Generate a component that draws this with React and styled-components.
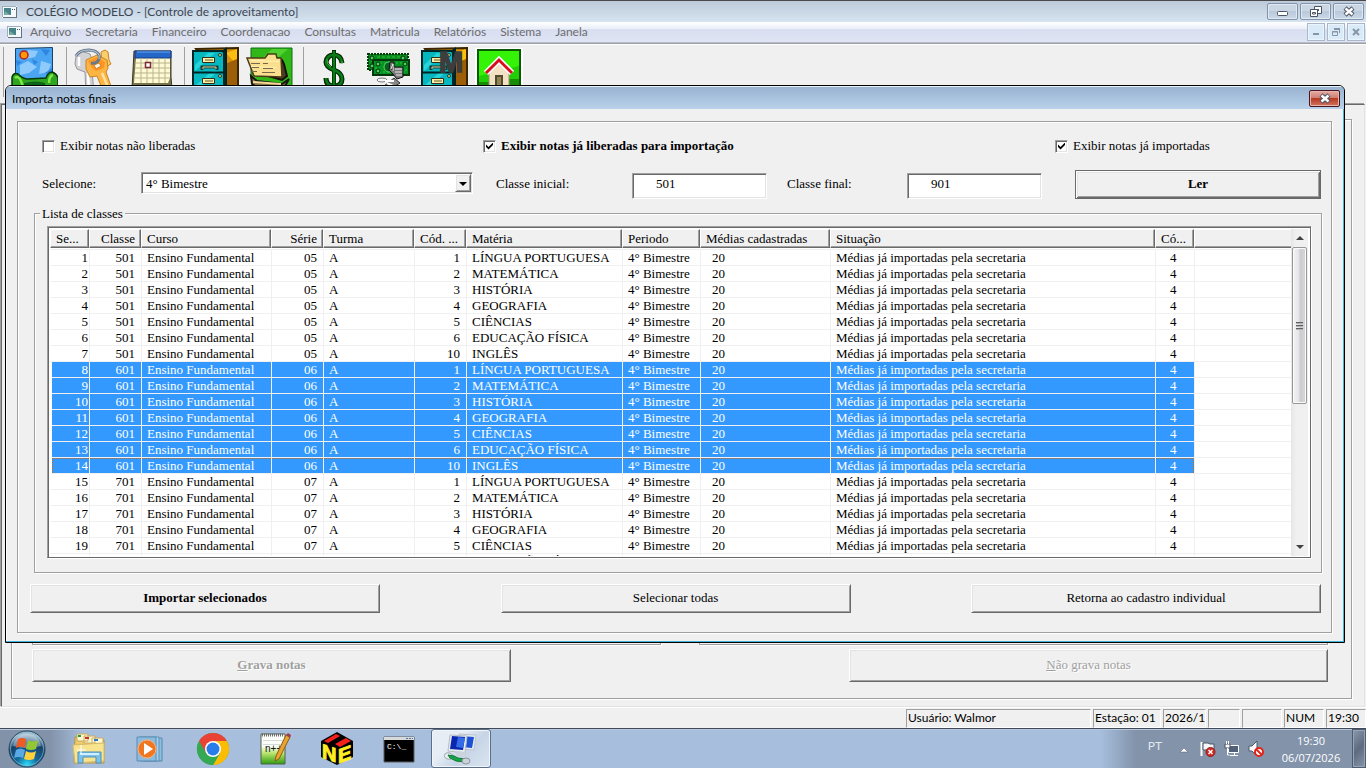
import React from 'react';
import styled, { createGlobalStyle, css } from 'styled-components';

const GlobalStyle = createGlobalStyle`
  * {
    box-sizing: border-box;
  }

  body {
    margin: 0;
    background: #f0f0f0;
    overflow: hidden;
  }

  button, input, select {
    font: inherit;
    color: inherit;
    margin: 0;
    border-radius: 0;
  }
`;

const serif = '"Liberation Serif", "Times New Roman", serif';
const sans = 'Lato, "Open Sans", sans-serif';

const raised = css`
  border: 1px solid;
  border-color: #fff #696969 #696969 #fff;
  box-shadow: inset 1px 1px 0 #e3e3e3, inset -1px -1px 0 #a0a0a0;
`;

const sunken = css`
  border: 1px solid;
  border-color: #a0a0a0 #fff #fff #a0a0a0;
  box-shadow: inset 1px 1px 0 #696969, inset -1px -1px 0 #e3e3e3;
`;

const etched = css`
  border: 1px solid #a0a0a0;
  box-shadow: 1px 1px 0 #fff, inset 1px 1px 0 #fff;
`;

const Desktop = styled.div`
  display: flex;
  flex-direction: column;
  height: 100vh;
  background: #f0f0f0;
  font: 12px ${sans};
  color: #000;
`;

const TitleBar = styled.header`
  display: flex;
  align-items: center;
  height: 22px;
  padding: 0 2px;
  border-top: 1px solid #4a4a4f;
  background: linear-gradient(#bccada, #d6e4f1);
  color: #3c4653;
  white-space: nowrap;
`;

const TitleText = styled.span`
  flex: 1;
  margin-left: 9px;
`;

const CaptionButtons = styled.div`
  display: flex;
  gap: 2px;
`;

const CaptionButton = styled.button`
  display: flex;
  align-items: center;
  justify-content: center;
  width: 31px;
  height: 17px;
  padding: 0;
  border: 1px solid #8393a9;
  border-radius: 2px;
  background: linear-gradient(#cad6e4 45%, #b9c8da 50%, #cbd9e8);
  box-shadow: inset 0 0 0 1px #dfe9f3;

  ${({ $close }) =>
    $close &&
    css`
      border-color: #4b1520;
      background: linear-gradient(#e0a298 10%, #d08073 45%, #b83a22 50%, #cf7460);
      box-shadow: inset 0 0 0 1px #e6b5ac;
    `}
`;

const ChildButton = styled(CaptionButton)`
  width: 18px;
  height: 18px;
  border-color: #a9b8c6;
  border-radius: 0;
  background: #d9eaf9;
  box-shadow: inset 0 0 0 1px #eaf4fd;
`;

const MenuBar = styled.nav`
  display: flex;
  align-items: center;
  height: 21px;
  padding: 0 1px 0 7px;
  border-bottom: 1px solid #b5bdd0;
  background: linear-gradient(#fff, #e9eef7 34%, #d8def0 38%, #e0e4f5);
  color: #6d6d6d;
`;

const MenuItem = styled.button`
  padding: 0;
  border: 0;
  background: none;
  line-height: 18px;
`;

const MenuItems = styled.div`
  flex: 1;
  display: flex;
  gap: 14px;
  margin-left: 8px;
`;

const Toolbar = styled.div`
  display: flex;
  align-items: flex-start;
  height: 61px;
  padding-left: 3px;
  border-top: 1px solid #a0a0a0;
  box-shadow: inset 0 1px 0 #fff;
`;

const ToolGroup = styled.div`
  display: flex;
  gap: 7px;
  height: 50px;
  margin-top: 3px;
  padding: 0 ${({ $end }) => $end || 6}px 0 6px;
  border-left: 1px solid #a0a0a0;
`;

const ToolButton = styled.button`
  width: 48px;
  height: 48px;
  padding: 0;
  border: 0;
  background: none;
`;

const MdiClient = styled.main`
  flex: 1;
  min-height: 0;
  display: flex;
  margin: 0 1px;
  padding: 14px 12px 7px 9px;
  border: 1px solid;
  border-color: #696969 #e3e3e3 #e3e3e3 #696969;
  box-shadow: -1px -1px 0 #a0a0a0;
`;

const ChildForm = styled.section`
  flex: 1;
  display: grid;
  grid-template: 1fr auto / 1fr 1fr;
  column-gap: 38px;
  row-gap: 4px;
  padding: 0 23px 16px 20px;
  ${etched}
`;

const Pane = styled.div`
  ${etched}
`;

const PushButton = styled.button`
  height: 29px;
  padding: 0 0 2px;
  background: #f0f0f0;
  font: ${({ $bold }) => ($bold ? 'bold' : 'normal')} 13px ${serif};
  ${raised}

  &:disabled {
    width: 479px;
    height: 33px;
    color: #a0a0a0;
    text-shadow: 1px 1px 0 #fff;
    justify-self: ${({ $side }) => $side};
  }
`;

const DefaultButton = styled(PushButton)`
  width: 246px;
  border-color: #696969;
  box-shadow: inset 1px 1px 0 #fff, inset -1px -1px 0 #696969, inset 2px 2px 0 #e3e3e3, inset -2px -2px 0 #a0a0a0;
`;

const Dialog = styled.section`
  position: absolute;
  top: 85px;
  left: 5px;
  right: 21px;
  border: 1px solid #000;
  border-radius: 6px 6px 0 0;
  background: #f0f0f0;
  box-shadow: inset -1px -1px 0 #42b4d8, inset 1px 1px 0 #fff;
  overflow: hidden;
`;

const DialogTitle = styled.header`
  display: flex;
  align-items: center;
  justify-content: space-between;
  height: 23px;
  padding: 0 4px 0 6px;
  border-top: 1px solid #e8f0f8;
  background: linear-gradient(#98b3d1, #b9d1ea);
  font: 12px ${sans};
`;

const Group = styled.div`
  margin: 12px 12px 9px 11px;
  padding-top: 16px;
  ${etched}
`;

const Form = styled.form`
  font: 13px/16px ${serif};
`;

const Checks = styled.div`
  display: grid;
  grid-template-columns: 441fr 572fr 276fr;
  height: 14px;
  padding-left: 24px;
`;

const CheckLabel = styled.label`
  display: flex;
  align-items: center;
  gap: 5px;
  font-weight: ${({ $bold }) => ($bold ? 'bold' : 'normal')};
  white-space: nowrap;
`;

const CheckBox = styled.input.attrs({ type: 'checkbox' })`
  appearance: none;
  width: 13px;
  height: 13px;
  background: #fff;
  ${sunken}

  &:checked::after {
    content: '';
    display: block;
    width: 7px;
    height: 7px;
    margin: 2px;
    background: #000;
    clip-path: polygon(0 29%, 36% 64%, 100% 0, 100% 36%, 36% 100%, 0 64%);
  }
`;

const Filters = styled.div`
  display: flex;
  align-items: center;
  height: 29px;
  margin-top: 18px;
  padding: 0 10px 0 24px;
`;

const FieldLabel = styled.label`
  width: ${({ $width }) => $width}px;
  padding-bottom: 2px;
`;

const SelectBox = styled.div`
  flex: 1;
  display: flex;
  position: relative;
  margin: 0 23px 3px 0;
`;

const Select = styled.select`
  appearance: none;
  flex: 1;
  height: 22px;
  padding: 2px 4px 0;
  background: #fff;
  ${sunken}
`;

const SelectArrow = styled.span`
  position: absolute;
  top: 2px;
  right: 2px;
  width: 16px;
  height: 18px;
  background: #f0f0f0;
  pointer-events: none;
  ${raised}

  &::after {
    content: '';
    position: absolute;
    top: 7px;
    left: 3px;
    border: 4px solid transparent;
    border-top-color: #000;
    border-bottom: 0;
  }
`;

const TextInput = styled.input`
  align-self: flex-end;
  width: 135px;
  height: 26px;
  margin-right: ${({ $gap }) => $gap}px;
  padding: 0 24px 4px 23px;
  background: #fff;
  ${sunken}
`;

const ListGroup = styled.fieldset`
  min-width: 0;
  margin: 5px 9px 0 16px;
  padding: 0;
  ${etched}
`;

const Legend = styled.legend`
  margin-left: 5px;
  padding: 2px 2px 0;
  background: #f0f0f0;
`;

const ListView = styled.div`
  display: flex;
  height: 332px;
  margin: 4px 10px 14px 12px;
  border: 1px solid #696969;
  border-top-color: #a0a0a0;
  border-left-color: #a0a0a0;
  background: #fff;
  box-shadow: inset 1px 1px 0 #696969, inset -1px -1px 0 #fff, 1px 1px 0 #fff;
`;

const ListBody = styled.div`
  flex: 1;
  min-width: 0;
  margin: 2px 0 1px 2px;
  overflow: hidden;
`;

const Table = styled.table`
  width: 100%;
  border-spacing: 0;
  table-layout: fixed;
`;

const Th = styled.th`
  height: 19px;
  padding: 0 5px 0 5px;
  background: #f0f0f0;
  border: solid;
  border-width: 1px;
  border-color: #fff #696969 #696969 #fff;
  box-shadow: inset -1px -1px 0 #a0a0a0;
  font-weight: normal;
  line-height: 16px;
  text-align: ${({ $align }) => $align || 'left'};
  white-space: nowrap;

  &:last-child {
    border-right: 0;
    box-shadow: inset 0 -1px 0 #a0a0a0;
  }
`;

const Spacer = styled.td`
  height: 2px;
  padding: 0;
  border-bottom: 1px solid #f0f0f0;
`;

const Td = styled.td`
  height: 16px;
  padding: 0 6px 0 ${({ $indent }) => $indent || 5}px;
  border-bottom: 1px solid #f0f0f0;
  border-left: 1px solid #f0f0f0;
  line-height: 14px;
  text-align: ${({ $align }) => $align || 'left'};
  white-space: nowrap;

  &:first-child {
    padding-right: 1px;
    border-left: 2px solid #fff;
  }
`;

// focus rectangle, one orange pixel out of two
const dots = 'linear-gradient(90deg, #cc6600 50%, #3399ff 50%) top left / 2px 1px repeat-x';
const sideDots = 'linear-gradient(#cc6600 50%, #3399ff 50%)';

const Tr = styled.tr`
  ${({ $selected }) =>
    $selected &&
    css`
      color: #fff;

      ${Td}:not(:last-child) {
        background: #3399ff;
        background-clip: padding-box;
      }
    `}

  ${({ $focused }) =>
    $focused &&
    css`
      ${Td}:not(:last-child) {
        background: ${dots}, #3399ff;
        background-clip: padding-box;
      }

      ${Td}:first-child {
        background: ${dots}, ${sideDots} top left / 1px 2px repeat-y, #3399ff;
        background-clip: padding-box;
      }

      ${Td}:nth-last-child(2) {
        background: ${dots}, ${sideDots} top right / 1px 2px repeat-y, #3399ff;
        background-clip: padding-box;
      }
    `}
`;

const ScrollBar = styled.div`
  display: flex;
  flex-direction: column;
  width: 17px;
  margin: 2px 2px 1px 0;
  background: linear-gradient(90deg, #e6e6e6, #f0f0f0 30%, #f0f0f0);
`;

const ScrollArrow = styled.button`
  display: flex;
  align-items: center;
  justify-content: center;
  width: 17px;
  height: 18px;
  padding: 0;
  border: 0;
  background: none;

  &::after {
    content: '';
    border: 4px solid transparent;
    ${({ $down }) =>
      $down
        ? 'border-top-color: #404040; border-bottom: 0;'
        : 'border-bottom-color: #404040; border-top: 0;'}
  }
`;

const ScrollTrack = styled.div`
  flex: 1;
`;

const ScrollThumb = styled.div`
  display: flex;
  flex-direction: column;
  align-items: center;
  justify-content: center;
  gap: 1px;
  width: 15px;
  height: 157px;
  margin-left: 1px;
  border: 1px solid #979797;
  border-radius: 2px;
  background: linear-gradient(90deg, #f4f4f4, #e4e4e6 45%, #cbcbd0 55%, #d9d9dc);
  box-shadow: inset 0 0 0 1px #fafafa;
`;

const Grip = styled.span`
  width: 7px;
  height: 2px;
  border-top: 1px solid #606060;
  background: #b4b4b4;
`;

const Actions = styled.div`
  display: flex;
  justify-content: space-between;
  margin: 11px 10px 19px 12px;

  ${PushButton} {
    width: 350px;
  }
`;

const StatusBar = styled.footer`
  display: flex;
  justify-content: flex-end;
  gap: 2px;
  height: 21px;
  padding-top: 1px;
  border-top: 1px solid #fff;
`;

const StatusItem = styled.span`
  width: ${({ $width }) => $width}px;
  height: 19px;
  padding-left: 1px;
  border: 1px solid;
  border-color: #a0a0a0 #fff #fff #a0a0a0;
  line-height: 16px;
  white-space: nowrap;
`;

const TaskBar = styled.footer`
  display: flex;
  height: 40px;
  border-top: 1px solid #404a5a;
  background: linear-gradient(90deg, #8292a9 50px, #a7bfdd 84px, #a7bfdd calc(100% - 266px), #8293aa calc(100% - 230px));
  box-shadow: inset 0 1px 0 #b9c8dc;
  color: #fff;
`;

const StartButton = styled.button`
  width: 58px;
  padding: 1px 0 0 8px;
  border: 0;
  background: none;
  text-align: left;
`;

const TaskButton = styled.button`
  width: 62px;
  height: 39px;
  padding: 0;
  border: 1px solid transparent;
  background: none;

  svg {
    display: block;
    margin: auto;
  }

  ${({ $active }) =>
    $active &&
    css`
      width: 60px;
      margin-left: 1px;
      border-color: #5c6f88;
      border-radius: 3px;
      background: linear-gradient(135deg, #e6edf5 35%, #c6d5e7 60%, #dbe5f0);
      box-shadow: inset 0 0 0 1px #f2f6fa;
    `}
`;

const Tray = styled.div`
  display: flex;
  align-items: center;
  gap: 8px;
  margin-left: auto;
`;

const Language = styled.span`
  align-self: flex-start;
  margin: 9px 6px 0 0;
  color: #e3e9f0;
`;

const Clock = styled.time`
  width: 62px;
  margin: 0 2px 0 8px;
  font: 11px/17px 'Open Sans', sans-serif;
  text-align: center;
`;

const ShowDesktop = styled.button`
  align-self: stretch;
  width: 14px;
  border: 1px solid #4f5c6e;
  background: linear-gradient(135deg, #8a98aa, #5d6b80 50%, #8595aa);
  box-shadow: inset 0 0 0 1px #96a6ba;
`;

const Svg = ({ w, h, box, children }) => (
  <svg width={w} height={h} viewBox={box || `0 0 ${w} ${h}`} aria-hidden="true">
    {children}
  </svg>
);

const WindowIcon = () => (
  <Svg w={15} h={12}>
    <path d="M0 0h15v12H0z" fill="#f7fafc" />
    <path d="M0 .5h14M.5 0v11" stroke="#9eb0bd" />
    <path d="M1 11.500h14M14.500 1v11" stroke="#65737d" />
    <path d="M2 2h7v7H2z" fill="#48838a" />
    <path d="M3 5l5 4H2z" fill="#7aad9f" />
    <path d="M10 3.500h1M12 3.500h1" stroke="#3d5268" />
  </Svg>
);

const MinGlyph = ({ child }) =>
  child ? (
    <Svg w={12} h={12}>
      <path d="M3 7h6v2H3z" fill="#8796a4" />
    </Svg>
  ) : (
    <Svg w={13} h={12}>
      <rect x="1.500" y="5.500" width="10" height="4" rx="1" fill="#fff" stroke="#4b5566" />
    </Svg>
  );

const RestoreGlyph = ({ child }) =>
  child ? (
    <Svg w={10} h={10}>
      <path d="M3 1h6v5H8V3H3z" fill="#8796a4" />
      <path d="M1.500 4.500h5v4h-5zM1 5h6" fill="none" stroke="#8796a4" />
    </Svg>
  ) : (
    <Svg w={12} h={12}>
      <path d="M4.500.5h7v7h-7z" fill="#fff" stroke="#4b5566" />
      <path d="M7 3h2v2H7z" fill="#4b5566" />
      <path d="M.5 3.500h7v7h-7z" fill="#fff" stroke="#4b5566" />
      <path d="M2.500 6.500h3v1.500h-3z" fill="#fff" stroke="#4b5566" />
    </Svg>
  );

const CloseGlyph = ({ child }) =>
  child ? (
    <Svg w={10} h={10}>
      <path d="M2 2l6 6M8 2L2 8" stroke="#8796a4" strokeWidth="2" />
    </Svg>
  ) : (
    <Svg w={12} h={11}>
      <path d="M2 2l8 7M10 2L2 9" stroke="#4b5566" strokeWidth="4.500" />
      <path d="M2.500 2.500l7 6M9.500 2.500l-7 6" stroke="#fff" strokeWidth="2.400" />
    </Svg>
  );

const PictureIcon = () => (
  <Svg w={48} h={48}>
    <path d="M5.500 1.500l37-1v36h-37z" fill="#4aa6f3" stroke="#1a4268" />
    <path d="M18 3l10 1-3 6-9 2zM31 14l10 3-3 8-9 2zM10 18l8-4 9 6-8 6-9 2z" fill="#8fcafc" />
    <path d="M31 2l9 1-4 6zM35 26l7-5v8zM6 13l6 2-5 4zM22 12l6 3-4 3z" fill="#2f86e0" />
    <circle cx="14" cy="8" r="4" fill="#ff9900" stroke="#b5202a" strokeWidth="1.500" />
    <path d="M2 30q2-5 6-3 5 5 10 5l18-1q2-6 6-6 6 2 6 8v15H2z" fill="#2fa322" stroke="#06380b" strokeWidth="1.500" />
    <path d="M5 31q3-3 6 3l2 6M39 36q0-7 4-8" stroke="#7fe843" strokeWidth="2.500" fill="none" />
    <path d="M14 36q12-3 21 0v12H14z" fill="#0d6419" />
  </Svg>
);

const KeysIcon = () => (
  <Svg w={48} h={48}>
    <path d="M3 9l5-5 9 3 3 8-1 8 2 24h-8l-1-22-8-3-2-5z" fill="#d2d2d5" stroke="#98989d" />
    <path d="M6 10v9M15 26l1 20" stroke="#fff" strokeWidth="2.500" fill="none" />
    <path d="M28 5l4-2 3 2 1 8 2 4-5 3-4-3z" fill="#fbcf6c" stroke="#c98324" />
    <path d="M13 13l11-5 10 5 1 8-2 4 7 20-5 3-5-4-6-15-7 1-4-8z" fill="#fbb545" stroke="#c98324" />
    <path d="M15 14l9-4 8 5-1 6-8 3-4-3z" fill="#ff9421" />
    <path d="M29 26l8 19" stroke="#ffe2a0" strokeWidth="2.500" />
    <path d="M21 18l5-2 2 3-5 3z" fill="#fbf6e8" stroke="#c98324" />
    <path d="M3 9q3-6 13-6 12 1 10 9-2 5-8 4" fill="none" stroke="#65798c" strokeWidth="3" />
    <path d="M3 9q3-6 13-6 12 1 10 9" fill="none" stroke="#bed0dd" />
  </Svg>
);

const CalendarIcon = () => (
  <Svg w={48} h={48}>
    <path d="M6 4h37v26l1 12H4z" fill="#77754c" stroke="#3b3a26" />
    <path d="M8 11h34v20l-2 5H6z" fill="#fff9d4" />
    <path d="M7 4h36v7H7z" fill="#2567c9" stroke="#153a83" />
    <path d="M9 5h33" stroke="#69a9f6" />
    <path d="M7 16h35M7 21h35M7 26h35M6 31h36M13 11v25M19 11v25M25 11v25M31 11v25M37 11v25" stroke="#b9b58c" />
    <path d="M17.500 15.500h5v5h-5z" fill="#fff" stroke="#7b2938" strokeWidth="1.500" />
  </Svg>
);

const CabinetIcon = ({ letter }) => (
  <Svg w={48} h={48}>
    <path d="M5 2l42-1v43H33z" fill="#dc9005" stroke="#3b2500" strokeWidth="2" />
    <path d="M35 6l11-4v16z" fill="#ffbc12" />
    <path d="M34 17l12-5v28l-12 5z" fill="#9c5e08" />
    <path d="M2 4h31v44H2z" fill="#05b7be" stroke="#032626" strokeWidth="2" />
    <path d="M4 18L17 6h7L4 24zM4 39l17-15h6L4 45z" fill="#27d5db" />
    <path d="M2 25.500h31M31 5l4-3v44" stroke="#002425" strokeWidth="2" fill="none" />
    <path d="M11.500 10.500h12v5h-12zM11.500 31.500h12v5h-12z" fill="#fff1a4" stroke="#332d19" />
    <path d="M14 13h8M14 34h8" stroke="#5d5536" />
    <path d="M11 23v-3h15v3" fill="none" stroke="#163d40" strokeWidth="3" />
    <path d="M12 22v-2h13v2" fill="none" stroke="#dfd18c" />
    <circle cx="29" cy="8" r="1.500" fill="#f4d365" stroke="#163d40" />
    <circle cx="29" cy="29" r="1.500" fill="#f4d365" stroke="#163d40" />
    {letter && (
      <text
        x="19"
        y="25"
        fontFamily="Liberation Sans, sans-serif"
        fontSize="29"
        fontWeight="bold"
        fill="#3d3d3d"
        stroke="#3d3d3d"
        strokeWidth="1.500"
      >
        {letter}
      </text>
    )}
  </Svg>
);

const FolderIcon = () => (
  <Svg w={48} h={48}>
    <path d="M5 1h41v42l-22 4L5 32z" fill="#32b719" stroke="#0c6c18" />
    <path d="M7 20L26 2h16L7 33z" fill="#4fd22e" />
    <path d="M5 29l6 5 25 3 7-5-5 9-17 6-15-10z" fill="#88754a" stroke="#171710" strokeWidth="2" />
    <path d="M10 17l22-6 4 2 2 4 3 12-5 4-18-5z" fill="#4b3b25" stroke="#151009" strokeWidth="2" />
    <path d="M1 11h18l3-4h8l1 4h4l1 19-28-1z" fill="#f9df8e" stroke="#4c3b17" strokeWidth="1.500" />
    <path d="M5 13.500l28 1M5 19.500l25 1" stroke="#fff2b4" />
    <path d="M5 16.500h9M17 16.500h5M6 20.500h7M17 21.500h10M6 24.500h5M16 25.500h13" stroke="#79664b" />
    <path d="M7 35l28 2M9 39l25 1" stroke="#f5da97" strokeWidth="2" />
  </Svg>
);

const DollarIcon = () => (
  <Svg w={48} h={48}>
    <path d="M24 3v43" stroke="#002703" strokeWidth="4" />
    <path
      d="M32 16q-1-8-8-8t-8 7q0 5 8 8t8 9q0 7-8 7t-8-8"
      fill="none"
      stroke="#002703"
      strokeWidth="5"
    />
    <path
      d="M32 16q-1-8-8-8t-8 7q0 5 8 8t8 9q0 7-8 7t-8-8M24 4v41"
      fill="none"
      stroke="#087d16"
      strokeWidth="2.500"
    />
    <path d="M17 12q-1 5 4 8M32 17v-3" fill="none" stroke="#51a847" />
  </Svg>
);

const MoneyIcon = () => (
  <Svg w={48} h={48}>
    <path d="M3 7h40v16H3z" fill="#078c20" stroke="#06370d" strokeWidth="2" strokeDasharray="2 1" />
    <path d="M7 10h30v10H7z" fill="none" stroke="#1da328" strokeWidth="2" strokeDasharray="3 2" />
    <path d="M8 13h36v15H8z" fill="#059321" stroke="#06370d" strokeWidth="2" />
    <path d="M11 16h30v9H11z" fill="none" stroke="#2dc444" strokeDasharray="2 2" />
    <circle cx="7" cy="11" r="2" stroke="#012c08" fill="#4ed265" />
    <circle cx="7" cy="19" r="2" stroke="#012c08" fill="#4ed265" />
    <circle cx="38" cy="11" r="2" stroke="#012c08" fill="#4ed265" />
    <circle cx="13" cy="17" r="2" stroke="#012c08" fill="#4ed265" />
    <circle cx="13" cy="24" r="2" stroke="#012c08" fill="#4ed265" />
    <circle cx="40" cy="17" r="2" stroke="#012c08" fill="#4ed265" />
    <ellipse cx="24" cy="20" rx="5" ry="5" fill="#06631a" stroke="#53d269" />
    <path d="M25 15h4v5h9v10l-6 2-5-6-3-3z" fill="#777" stroke="#111" />
    <path d="M26 22l2-5v7M30 22h7M30 25h7M31 28h6" stroke="#eee" />
    <ellipse cx="17" cy="33" rx="5" ry="2" fill="#f5f5f5" stroke="#777" />
    <path d="M19 39l10-8 6 5-8 5z" fill="#888" stroke="#333" />
    <path d="M22 36l6 3M20 34h9" stroke="#fff" strokeWidth="2" />
  </Svg>
);

const HomeIcon = () => (
  <Svg w={48} h={48}>
    <path d="M0 1h48v47H0z" fill="#fff" />
    <path d="M3 3h42v45H3z" fill="#21cf04" stroke="#085900" strokeWidth="2" />
    <path d="M4 4h40v15L4 29z" fill="#34f306" />
    <path d="M4 35h11v13H4zM34 32h10v16H34z" fill="#168d05" />
    <path d="M14 24l10-10 10 10v24H14z" fill="#f3e1c4" stroke="#9b8e78" />
    <path d="M11 26l13-13 13 13" fill="none" stroke="#fff" strokeWidth="6" />
    <path d="M11 26l13-13 13 13" fill="none" stroke="#d80d20" strokeWidth="3" />
    <path d="M20 28h8v10h-8z" fill="#544c2c" />
    <path d="M22 30h4v8h-4z" fill="#8f8556" />
  </Svg>
);

const StartIcon = () => (
  <Svg w={38} h={38}>
    <defs>
      <radialGradient id="orb" cx="50%" cy="95%" r="85%">
        <stop offset="0" stopColor="#2be2ff" />
        <stop offset=".35" stopColor="#15699c" />
        <stop offset=".75" stopColor="#164066" />
        <stop offset="1" stopColor="#a9c5d5" />
      </radialGradient>
    </defs>
    <circle cx="19" cy="19" r="18" fill="url(#orb)" stroke="#244560" />
    <circle cx="19" cy="19" r="16.500" fill="none" stroke="#80b3cd" opacity=".7" />
    <path d="M5 16Q8 4 19 4t14 12Q19 20 5 16z" fill="#cfdee9" opacity=".45" />
    <path d="M10 9q4-2 8 0l-1 9q-4-3-9 0z" fill="#f05a24" />
    <path d="M20 10q5 3 10 0l-2 9q-5 2-10 0z" fill="#93c832" />
    <path d="M8 20q4-3 9 0l-2 8q-4-2-9 0z" fill="#59a9e4" />
    <path d="M18 21q5 3 10 0l-2 8q-5 2-10 0z" fill="#ffd13d" />
  </Svg>
);

const ExplorerIcon = () => (
  <Svg w={34} h={34}>
    <path d="M3 5h9l2 3h18v23H2z" fill="#eecb67" stroke="#b2914b" />
    <path d="M5 2h11v7H5zM12 4h11v7H12zM20 6h11v7H20z" fill="#fff7cd" stroke="#c7aa62" />
    <path d="M6 3h3v2H6z" fill="#249b3a" />
    <path d="M13 5h4v2h-4z" fill="#c8312a" />
    <path d="M22 7h4v2h-4z" fill="#3278bd" />
    <path d="M1 13l31-2v18L3 31z" fill="#f8e48f" stroke="#d4ba6a" />
    <path d="M6 31V20h23v11h-5v-6H11v6z" fill="#7cc2e8" stroke="#4b91be" />
    <path d="M8 22h19" stroke="#d1f0ff" strokeWidth="2" />
    <path d="M9 13v9M5 18h9" stroke="#fff" />
  </Svg>
);

const PlayerIcon = () => (
  <Svg w={34} h={34}>
    <path d="M10 6h18v23H10z" fill="#8dbfe0" stroke="#5487ad" />
    <path d="M6 5h19v24H6z" fill="#a7cfeb" stroke="#5c91b7" />
    <path d="M3 5h19v24H3z" fill="#8bbce0" stroke="#5c8bb0" />
    <circle cx="13" cy="17" r="9" fill="#f17622" stroke="#ffb171" />
    <path d="M10 11l9 6-9 6z" fill="#fff" />
  </Svg>
);

const ChromeIcon = () => (
  <Svg w={34} h={34}>
    <circle cx="17" cy="17" r="16" fill="#34a853" />
    <path d="M17 9h13.900a16 16 0 0 1-13.900 24l7-12z" fill="#fbbc04" />
    <path d="M3.100 9A16 16 0 0 0 17 33l7-12-14 0z" fill="#34a853" />
    <path d="M3.100 9A16 16 0 0 1 30.900 9H17l-7 12z" fill="#ea4335" />
    <circle cx="17" cy="17" r="8" fill="#fff" />
    <circle cx="17" cy="17" r="6.500" fill="#287de8" />
  </Svg>
);

const NotepadIcon = () => (
  <Svg w={34} h={34}>
    <defs>
      <linearGradient id="page" x2="0" y2="1">
        <stop offset=".4" stopColor="#fbfdf8" />
        <stop offset=".65" stopColor="#b5e36b" />
        <stop offset="1" stopColor="#2f9d10" />
      </linearGradient>
    </defs>
    <path d="M3 2h24v30H3z" fill="url(#page)" stroke="#52604b" />
    <path d="M4 3h22" stroke="#6b6b6b" strokeWidth="3" strokeDasharray="1 1" />
    <path d="M5 8.500h21M5 12.500h21" stroke="#d3ddd5" />
    <text x="7" y="20" fontFamily="Liberation Sans, sans-serif" fontSize="10" fill="#171717">
      n++
    </text>
    <path d="M28 3l4 2-11 22-4 2 1-5z" fill="#e8a52e" stroke="#895b1c" />
    <path d="M28 3l2-2 3 2-1 3z" fill="#a03c4c" />
  </Svg>
);

const BlocksIcon = () => (
  <Svg w={34} h={34}>
    <path d="M1 9L17 0l16 9v16l-16 8-16-8z" fill="#000" />
    <path d="M4 9L16 2l4 2L8 11z" fill="#f6211c" />
    <path d="M15 12l11-6 5 3-11 6z" fill="#f6211c" />
    <g fontFamily="Liberation Sans, sans-serif" fontSize="20" fontWeight="bold" fill="#ffed23" stroke="#ffed23">
      <text x="2" y="25" transform="skewY(18)">
        N
      </text>
      <text x="18" y="38" transform="skewY(-20)">
        E
      </text>
    </g>
  </Svg>
);

const ConsoleIcon = () => (
  <Svg w={34} h={34}>
    <path d="M2 5h30v25H2z" fill="#000" stroke="#5b5c60" />
    <path d="M2 5h30v3H2z" fill="#d8d9db" />
    <path d="M24 6.500h2M27 6.500h2M30 6.500h1" stroke="#4876a1" />
    <text x="5" y="17" fontFamily="Liberation Mono, monospace" fontSize="8" fill="#fff">
      C:\_
    </text>
  </Svg>
);

const RemoteIcon = () => (
  <Svg w={34} h={34}>
    <path d="M15 2l17 1-2 15-15-1z" fill="#e4eaf0" stroke="#bac4ce" />
    <path d="M17 4l13 1-2 11-11-1z" fill="#1a51d6" />
    <path d="M6 3l17 1-2 17-17-2z" fill="#e4eaf0" stroke="#b6bdc7" />
    <path d="M8 4l13 1-2 13-13-1z" fill="#0927af" />
    <path d="M14 5l7 1-2 10-7-1z" fill="#346be7" />
    <path d="M14 19l7 1 2 4H11z" fill="#cbd4dc" />
    <path d="M0 24q1-4 6-3l4 3-3 3q-5 1-7-3z" fill="#e8edf1" stroke="#9aa4ae" />
    <path d="M4 23l6 1 4 2 7 1v3l-9-1-6-3z" fill="#16a447" stroke="#0d7a33" />
    <ellipse cx="22" cy="29" rx="4" ry="3" fill="#cbd2d8" stroke="#8b959e" />
  </Svg>
);

const FlagIcon = () => (
  <Svg w={16} h={16}>
    <path d="M1.500 1v14" stroke="#fff" strokeWidth="2" />
    <path d="M3 2h5l2 1h4v7H9L7 9H3z" fill="#f5f7fa" stroke="#4a5667" />
    <circle cx="10.500" cy="11" r="4.500" fill="#d92620" stroke="#8b211e" />
    <path d="M8.500 9l4 4M12.500 9l-4 4" stroke="#fff" strokeWidth="1.500" />
  </Svg>
);

const NetworkIcon = () => (
  <Svg w={16} h={16}>
    <path d="M4.500 4.500h10v7h-10z" fill="#526178" stroke="#fff" />
    <path d="M6 14.500h8M10.500 12v2" stroke="#fff" />
    <path d="M1 3h5v4H1z" fill="#fff" stroke="#455064" />
    <path d="M2.500 0v3M4.500 0v3M3.500 7v7h2" fill="none" stroke="#fff" />
  </Svg>
);

const SoundIcon = () => (
  <Svg w={16} h={16}>
    <path d="M1 5h3l5-5v15l-5-5H1z" fill="#f8fafc" stroke="#4d596a" />
    <circle cx="11" cy="11" r="4" fill="#fff" stroke="#e2231a" strokeWidth="2" />
    <path d="M8 8l6 6" stroke="#e2231a" strokeWidth="2" />
  </Svg>
);

const HiddenIcons = () => (
  <Svg w={16} h={16}>
    <path d="M4 11l4-4 4 4z" fill="#fff" stroke="#566579" strokeWidth=".500" />
  </Svg>
);

const MENUS = [
  'Arquivo',
  'Secretaria',
  'Financeiro',
  'Coordenacao',
  'Consultas',
  'Matricula',
  'Relatórios',
  'Sistema',
  'Janela',
];

const COLUMNS = [
  { title: 'Se...', width: 39, align: 'right', head: 'left' },
  { title: 'Classe', width: 52, align: 'right' },
  { title: 'Curso', width: 130 },
  { title: 'Série', width: 52, align: 'right' },
  { title: 'Turma', width: 91 },
  { title: 'Cód. ...', width: 52, align: 'right', head: 'left' },
  { title: 'Matéria', width: 156 },
  { title: 'Periodo', width: 78 },
  { title: 'Médias cadastradas', width: 130, indent: 11 },
  { title: 'Situação', width: 325 },
  { title: 'Có...', width: 39, indent: 14 },
];

const SUBJECTS = [
  [1, 'LÍNGUA PORTUGUESA'],
  [2, 'MATEMÁTICA'],
  [3, 'HISTÓRIA'],
  [4, 'GEOGRAFIA'],
  [5, 'CIÊNCIAS'],
  [6, 'EDUCAÇÃO FÍSICA'],
  [10, 'INGLÊS'],
];

const ROWS = ['05', '06', '07']
  .flatMap((serie) =>
    SUBJECTS.map(([code, subject]) => [
      `${Number(serie)}01`,
      'Ensino Fundamental',
      serie,
      'A',
      code,
      subject,
      '4° Bimestre',
      '20',
      'Médias já importadas pela secretaria',
      '4',
    ]),
  )
  .slice(0, 20)
  .map((cells, index) => [index + 1, ...cells]);

const STATUS = [
  ['Usuário: Walmor', 185],
  ['Estação: 01', 68],
  ['2026/1', 43],
  ['', 32],
  ['', 40],
  ['NUM', 40],
  ['19:30', 40],
];

const ClassTable = () => (
  <Table>
    <colgroup>
      {COLUMNS.map(({ title, width }) => (
        <col key={title} width={width} />
      ))}
      <col />
    </colgroup>
    <thead>
      <tr>
        {COLUMNS.map(({ title, align, head }) => (
          <Th key={title} $align={head || align}>
            {title}
          </Th>
        ))}
        <Th />
      </tr>
    </thead>
    <tbody>
      <tr>
        <Spacer colSpan={COLUMNS.length + 1} />
      </tr>
      {ROWS.map((cells) => (
        <Tr key={cells[0]} $selected={cells[1] === '601'} $focused={cells[0] === 14}>
          {cells.map((cell, i) => (
            <Td key={COLUMNS[i].title} $align={COLUMNS[i].align} $indent={COLUMNS[i].indent}>
              {cell}
            </Td>
          ))}
          <Td />
        </Tr>
      ))}
    </tbody>
  </Table>
);

const ImportDialog = () => (
  <Dialog role="dialog" aria-labelledby="dialog-title">
    <DialogTitle>
      <span id="dialog-title">Importa notas finais</span>
      <CaptionButton $close aria-label="Fechar">
        <CloseGlyph />
      </CaptionButton>
    </DialogTitle>
    <Form onSubmit={(e) => e.preventDefault()}>
      <Group>
        <Checks>
          <CheckLabel>
            <CheckBox />
            Exibir notas não liberadas
          </CheckLabel>
          <CheckLabel $bold>
            <CheckBox defaultChecked />
            Exibir notas já liberadas para importação
          </CheckLabel>
          <CheckLabel>
            <CheckBox defaultChecked />
            Exibir notas já importadas
          </CheckLabel>
        </Checks>
        <Filters>
          <FieldLabel htmlFor="periodo" $width={99}>
            Selecione:
          </FieldLabel>
          <SelectBox>
            <Select id="periodo">
              <option>4° Bimestre</option>
            </Select>
            <SelectArrow />
          </SelectBox>
          <FieldLabel htmlFor="inicial" $width={136}>
            Classe inicial:
          </FieldLabel>
          <TextInput id="inicial" defaultValue="501" $gap={20} />
          <FieldLabel htmlFor="final" $width={120}>
            Classe final:
          </FieldLabel>
          <TextInput id="final" defaultValue="901" $gap={33} />
          <DefaultButton $bold>Ler</DefaultButton>
        </Filters>
        <ListGroup>
          <Legend>Lista de classes</Legend>
          <ListView>
            <ListBody>
              <ClassTable />
            </ListBody>
            <ScrollBar>
              <ScrollArrow type="button" aria-label="Acima" />
              <ScrollTrack>
                <ScrollThumb>
                  <Grip />
                  <Grip />
                  <Grip />
                </ScrollThumb>
              </ScrollTrack>
              <ScrollArrow type="button" aria-label="Abaixo" $down />
            </ScrollBar>
          </ListView>
        </ListGroup>
        <Actions>
          <PushButton type="button" $bold>
            Importar selecionados
          </PushButton>
          <PushButton type="button">Selecionar todas</PushButton>
          <PushButton type="button">Retorna ao cadastro individual</PushButton>
        </Actions>
      </Group>
    </Form>
  </Dialog>
);

const App = () => (
  <>
    <GlobalStyle />
    <Desktop>
      <TitleBar>
        <WindowIcon />
        <TitleText>COLÉGIO MODELO - [Controle de aproveitamento]</TitleText>
        <CaptionButtons>
          <CaptionButton aria-label="Minimizar">
            <MinGlyph />
          </CaptionButton>
          <CaptionButton aria-label="Restaurar">
            <RestoreGlyph />
          </CaptionButton>
          <CaptionButton aria-label="Fechar">
            <CloseGlyph />
          </CaptionButton>
        </CaptionButtons>
      </TitleBar>
      <MenuBar>
        <WindowIcon />
        <MenuItems>
          {MENUS.map((menu) => (
            <MenuItem key={menu}>{menu}</MenuItem>
          ))}
        </MenuItems>
        <CaptionButtons>
          <ChildButton aria-label="Minimizar janela">
            <MinGlyph child />
          </ChildButton>
          <ChildButton aria-label="Restaurar janela">
            <RestoreGlyph child />
          </ChildButton>
          <ChildButton aria-label="Fechar janela">
            <CloseGlyph child />
          </ChildButton>
        </CaptionButtons>
      </MenuBar>
      <Toolbar>
        <ToolGroup $end={8}>
          <ToolButton aria-label="Imagem">
            <PictureIcon />
          </ToolButton>
        </ToolGroup>
        <ToolGroup $end={8}>
          <ToolButton aria-label="Senhas">
            <KeysIcon />
          </ToolButton>
          <ToolButton aria-label="Calendário">
            <CalendarIcon />
          </ToolButton>
        </ToolGroup>
        <ToolGroup $end={9}>
          <ToolButton aria-label="Arquivo">
            <CabinetIcon />
          </ToolButton>
          <ToolButton aria-label="Pastas">
            <FolderIcon />
          </ToolButton>
        </ToolGroup>
        <ToolGroup>
          <ToolButton aria-label="Financeiro">
            <DollarIcon />
          </ToolButton>
          <ToolButton aria-label="Pagamentos">
            <MoneyIcon />
          </ToolButton>
          <ToolButton aria-label="Matrículas">
            <CabinetIcon letter="M" />
          </ToolButton>
          <ToolButton aria-label="Início">
            <HomeIcon />
          </ToolButton>
        </ToolGroup>
      </Toolbar>
      <MdiClient>
        <ChildForm>
          <Pane />
          <Pane />
          <PushButton disabled $bold $side="start">
            <u>G</u>rava notas
          </PushButton>
          <PushButton disabled $side="end">
            <u>N</u>ão grava notas
          </PushButton>
        </ChildForm>
      </MdiClient>
      <StatusBar>
        {STATUS.map(([text, width], i) => (
          <StatusItem key={i} $width={width}>
            {text}
          </StatusItem>
        ))}
      </StatusBar>
      <TaskBar>
        <StartButton aria-label="Iniciar">
          <StartIcon />
        </StartButton>
        <TaskButton aria-label="Explorador">
          <ExplorerIcon />
        </TaskButton>
        <TaskButton aria-label="Reprodutor">
          <PlayerIcon />
        </TaskButton>
        <TaskButton aria-label="Chrome">
          <ChromeIcon />
        </TaskButton>
        <TaskButton aria-label="Notepad++">
          <NotepadIcon />
        </TaskButton>
        <TaskButton aria-label="NE">
          <BlocksIcon />
        </TaskButton>
        <TaskButton aria-label="Prompt">
          <ConsoleIcon />
        </TaskButton>
        <TaskButton aria-label="Área remota" $active>
          <RemoteIcon />
        </TaskButton>
        <Tray>
          <Language>PT</Language>
          <HiddenIcons />
          <FlagIcon />
          <NetworkIcon />
          <SoundIcon />
          <Clock>
            19:30
            <br />
            06/07/2026
          </Clock>
          <ShowDesktop aria-label="Mostrar área de trabalho" />
        </Tray>
      </TaskBar>
    </Desktop>
    <ImportDialog />
  </>
);

export default App;
